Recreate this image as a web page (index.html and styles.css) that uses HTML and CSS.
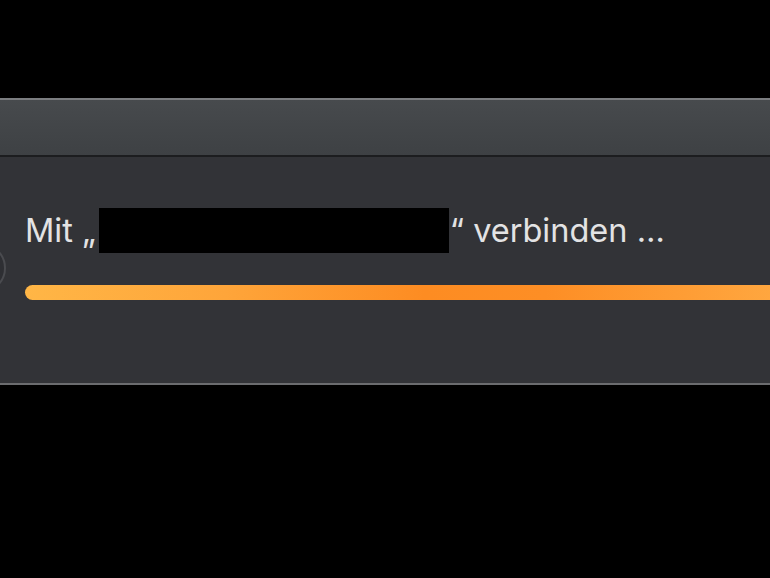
FILE: index.html
```html
<!DOCTYPE html>
<html lang="de">
<head>
<meta charset="utf-8">
<link rel="stylesheet" href="styles.css">
</head>
<body>
<div class="window">
  <div class="titlebar"></div>
  <div class="content">
    <div class="avatar"></div>
    <div class="message"><span class="word open">Mit „</span><span class="redacted"></span><span class="word close">“ verbinden …</span></div>
    <div class="progress"></div>
  </div>
</div>
</body>
</html>
```

FILE: styles.css
```css
html, body {
  margin: 0;
  padding: 0;
  background: #000;
  width: 770px;
  height: 578px;
  overflow: hidden;
}
.window {
  margin-top: 98px;
  width: 100%;
  overflow: hidden;
}
.titlebar {
  height: 55px;
  border-top: 2px solid #7b7d80;
  background: linear-gradient(#474a4d, #3e4144);
  border-bottom: 2px solid #1c1d1f;
}
.content {
  position: relative;
  height: 228px;
  background: #323337;
  border-bottom: 2px solid #6b6c6f;
  padding: 51px 0 0 25px;
  box-sizing: border-box;
}
.avatar {
  position: absolute;
  left: -44px;
  top: 86px;
  width: 46px;
  height: 46px;
  border-radius: 50%;
  border: 2px solid #4a4b4f;
  background: #2e2f33;
}
.message {
  font-family: Inter, "Liberation Sans", sans-serif;
  font-size: 32.5px;
  color: #e3e3e4;
  height: 45px;
  display: flex;
  align-items: center;
  white-space: nowrap;
}
.open {
  margin-right: 3px;
}
.close {
  margin-left: 1px;
}
.redacted {
  display: inline-block;
  width: 350px;
  height: 45px;
  background: #000;
}
.progress {
  margin-top: 32px;
  width: 800px;
  height: 15px;
  border-radius: 8px;
  background: linear-gradient(90deg, #ffb646 0%, #fea53a 25%, #fd8c22 50%, #fd8e25 65%, #ffac45 100%);
}
```
